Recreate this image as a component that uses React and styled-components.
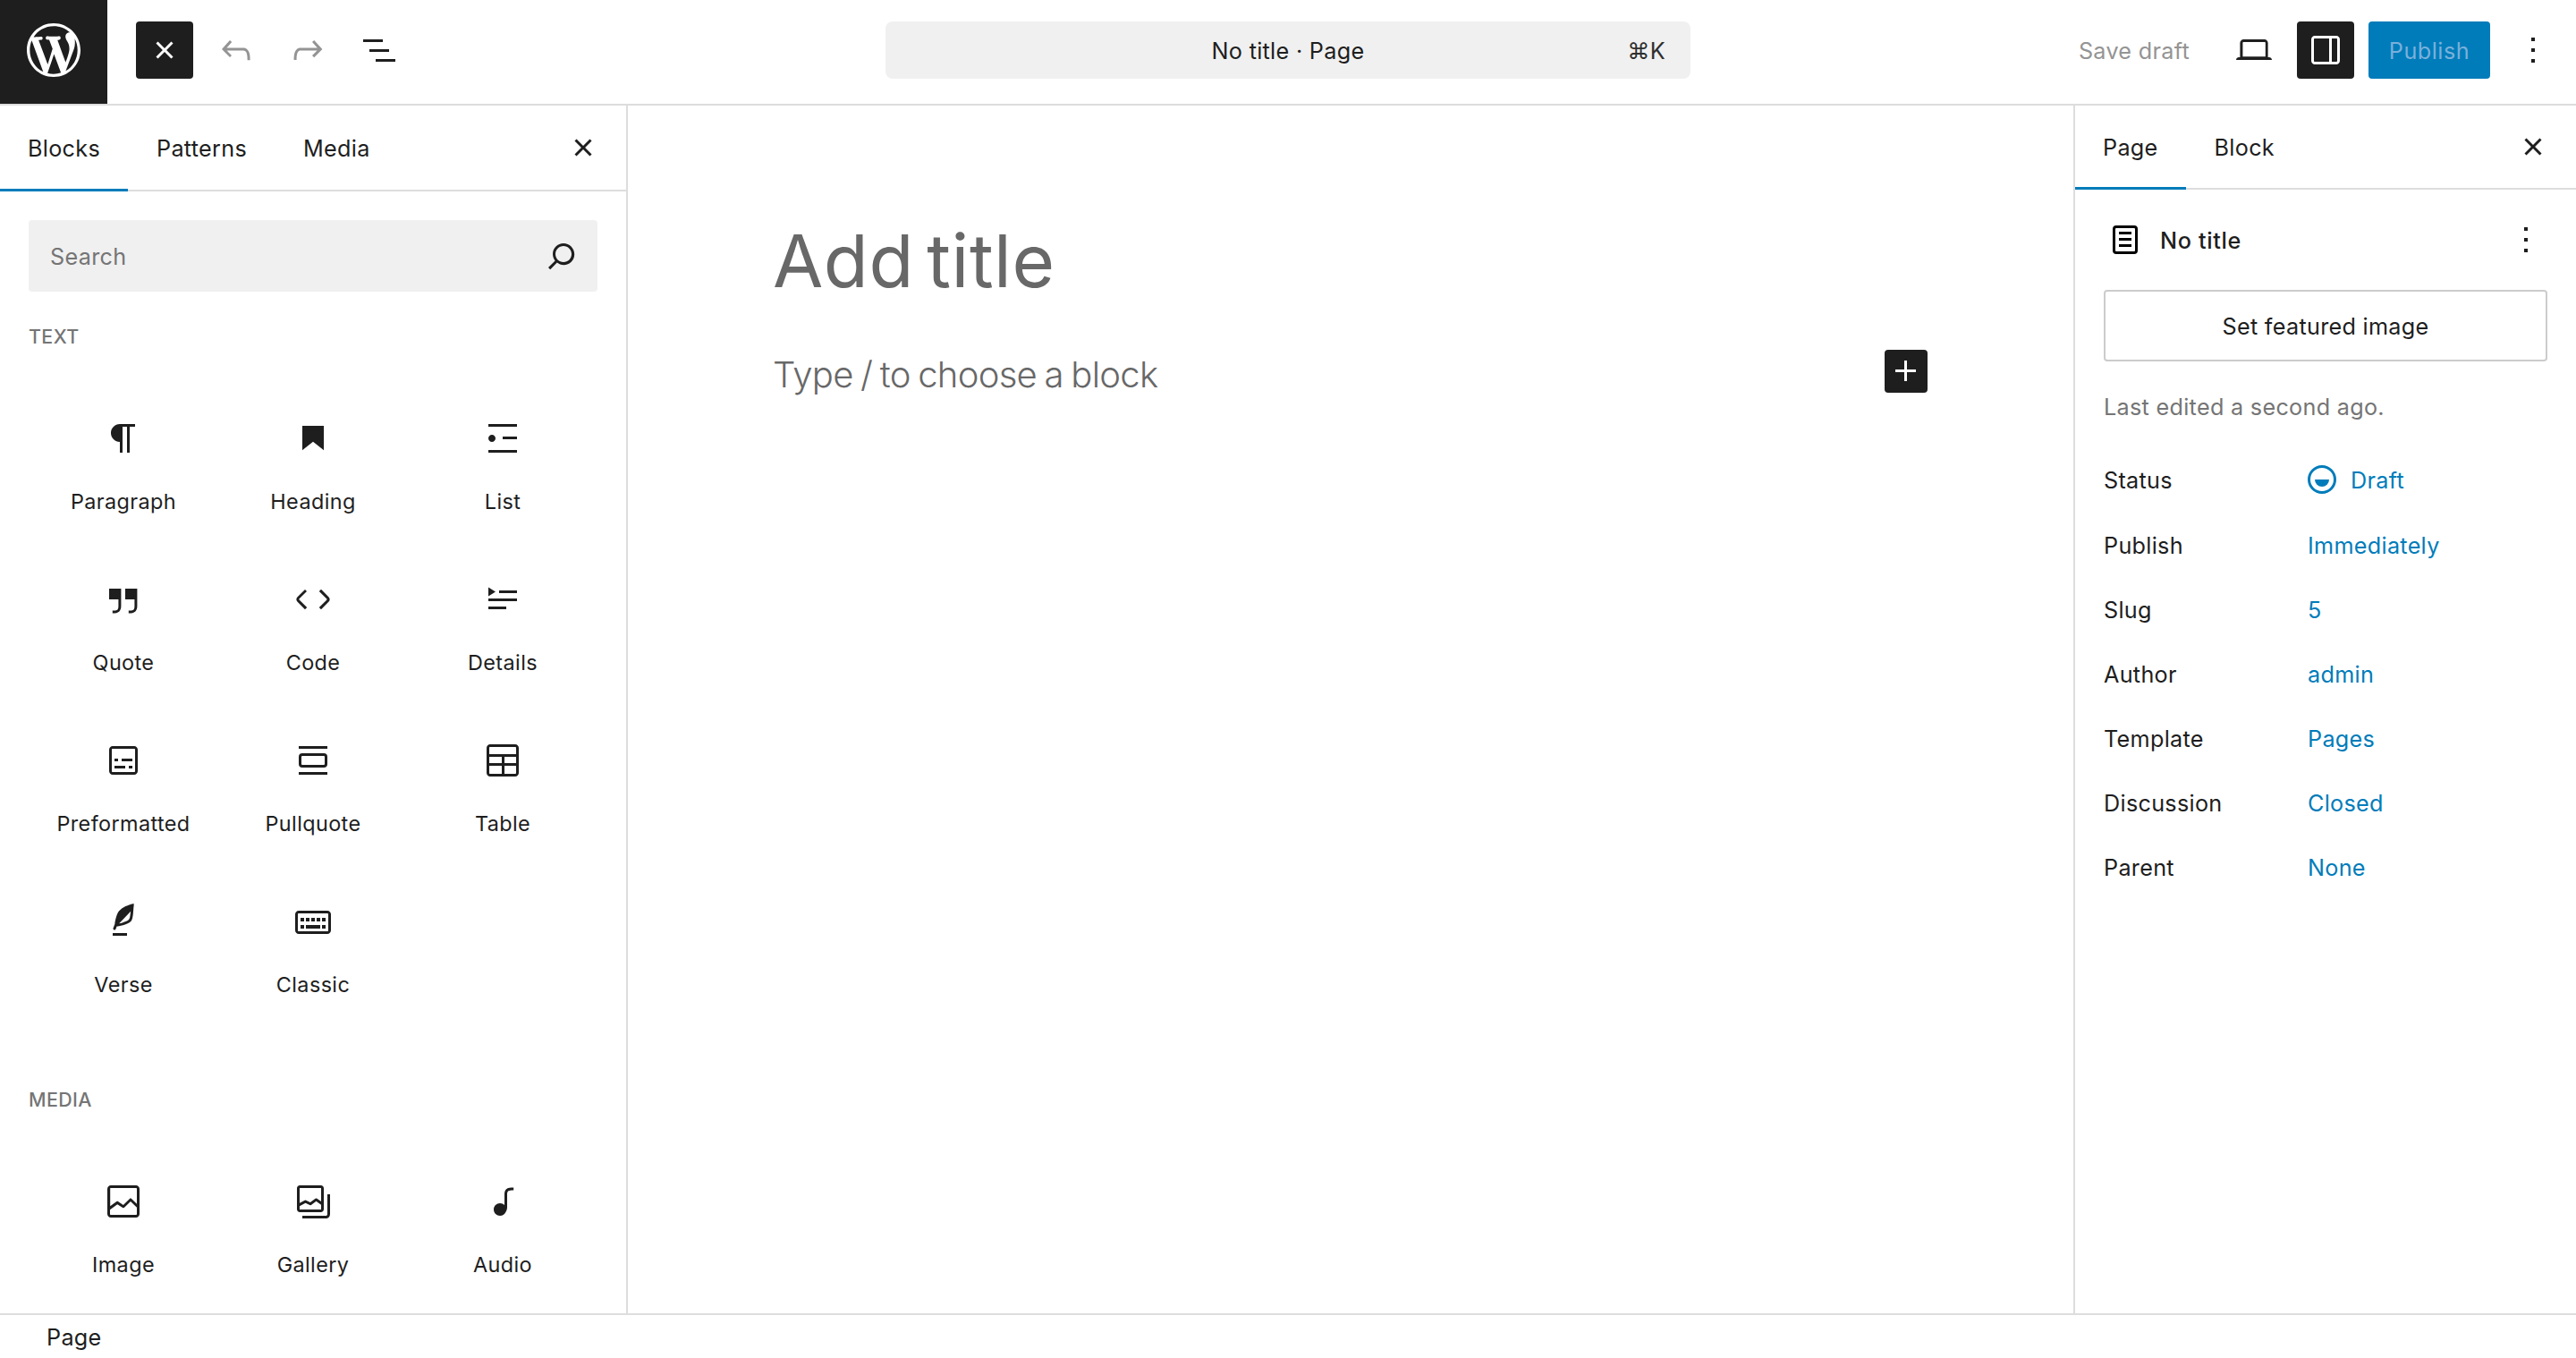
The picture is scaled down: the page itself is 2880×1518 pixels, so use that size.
import React from 'react';
import styled, { createGlobalStyle, css } from 'styled-components';

const Global = createGlobalStyle`
  *, *::before, *::after { box-sizing: border-box; }
  html, body { margin: 0; background: #fff; }
  body, button { font-family: Inter, "Liberation Sans", sans-serif; }
  button { border: 0; padding: 0; background: none; color: inherit; }
`;

const ICONS = {
  wordpress: 'M20 10c0-5.51-4.49-10-10-10C4.48 0 0 4.49 0 10c0 5.52 4.48 10 10 10 5.51 0 10-4.48 10-10zM7.78 15.37L4.37 6.22c.55-.02 1.17-.08 1.17-.08.5-.06.44-1.13-.06-1.11 0 0-1.45.11-2.37.11-.18 0-.37 0-.58-.01C4.12 2.69 6.87 1.11 10 1.11c2.33 0 4.45.87 6.05 2.34-.68-.11-1.65.39-1.65 1.58 0 .74.45 1.36.9 2.1.35.61.55 1.36.55 2.46 0 1.49-1.4 5-1.4 5l-3.03-8.37c.54-.02.82-.17.82-.17.5-.05.44-1.25-.06-1.22 0 0-1.44.12-2.38.12-.87 0-2.33-.12-2.33-.12-.5-.03-.56 1.2-.06 1.22l.92.08 1.26 3.41zM17.41 10c.24-.64.74-1.87.43-4.25.7 1.29 1.05 2.71 1.05 4.25 0 3.29-1.73 6.24-4.4 7.78.97-2.59 1.94-5.2 2.92-7.78zM6.1 18.09C3.12 16.65 1.11 13.53 1.11 10c0-1.3.23-2.48.72-3.59C3.25 10.3 4.67 14.2 6.1 18.09zm4.03-6.63l2.58 6.98c-.86.29-1.76.45-2.71.45-.79 0-1.57-.11-2.29-.33.81-2.38 1.62-4.74 2.42-7.1z',
  close: 'M12 13.06l3.712 3.713 1.061-1.06L13.061 12l3.712-3.712-1.06-1.06L12 10.938 8.288 7.227l-1.061 1.06L10.939 12l-3.712 3.712 1.06 1.061L12 13.061z',
  undo: 'M18.3 11.7c-.6-.6-1.4-.9-2.3-.9H6.7l2.9-3.3-1.1-1-4.5 5L8.5 16l1-1-2.7-2.7H16c.5 0 .9.2 1.3.5 1 1 1 3.4 1 4.5v.3h1.5v-.2c0-1.5 0-4.3-1.5-5.7z',
  redo: 'M15.6 6.5l-1.1 1 2.9 3.3H8c-.9 0-1.7.3-2.3.9-1.4 1.5-1.4 4.2-1.4 5.6v.2h1.5v-.3c0-1.1 0-3.5 1-4.5.3-.3.7-.5 1.3-.5h9.2L14.5 15l1.1 1.1 4.6-4.6-4.6-5z',
  listView: 'M3 6h11v1.5H3V6Zm3.5 5.5h11V13h-11v-1.5ZM21 17H10v1.5h11V17Z',
  laptop: 'M20.5 16h-.7V8c0-1.1-.9-2-2-2H6.2c-1.1 0-2 .9-2 2v8h-.7c-.8 0-1.5.7-1.5 1.5h20c0-.8-.7-1.5-1.5-1.5zM5.7 8c0-.3.2-.5.5-.5h11.7c.3 0 .5.2.5.5v7.6H5.7V8z',
  drawer: 'M18 4H6c-1.1 0-2 .9-2 2v12c0 1.1.9 2 2 2h12c1.1 0 2-.9 2-2V6c0-1.1-.9-2-2-2zm-4 14.5H6c-.3 0-.5-.2-.5-.5V6c0-.3.2-.5.5-.5h8v13zm4.5-.5c0 .3-.2.5-.5.5h-2.5v-13H18c.3 0 .5.2.5.5v12z',
  more: 'M13 19h-2v-2h2v2zm0-6h-2v-2h2v2zm0-6h-2V5h2v2z',
  search: 'M13 5c-3.3 0-6 2.7-6 6 0 1.4.5 2.7 1.3 3.7l-3.8 3.8 1.1 1.1 3.8-3.8c1 .8 2.3 1.3 3.7 1.3 3.3 0 6-2.7 6-6S16.3 5 13 5zm0 10.5c-2.5 0-4.5-2-4.5-4.5s2-4.5 4.5-4.5 4.5 2 4.5 4.5-2 4.5-4.5 4.5z',
  plus: 'M11 12.5V17.5H12.5V12.5H17.5V11H12.5V6H11V11H6V12.5H11Z',
  page: 'M15.5 7.5h-7V9h7V7.5Zm-7 3.5h7v1.5h-7V11Zm7 3.5h-7V16h7v-1.5ZM17 4H7a2 2 0 0 0-2 2v12a2 2 0 0 0 2 2h10a2 2 0 0 0 2-2V6a2 2 0 0 0-2-2ZM7 5.5h10a.5.5 0 0 1 .5.5v12a.5.5 0 0 1-.5.5H7a.5.5 0 0 1-.5-.5V6a.5.5 0 0 1 .5-.5Z',
  draft: 'M12 4a8 8 0 1 0 0 16 8 8 0 0 0 0-16Zm6.5 8a6.5 6.5 0 1 1-13 0 6.5 6.5 0 0 1 13 0ZM8 12a4 4 0 0 0 8 0H8Z',
  paragraph: 'm9.99609 14v-.2251l.00391.0001v6.225h1.5v-14.5h2.5v14.5h1.5v-14.5h3v-1.5h-8.50391c-2.76142 0-5 2.23858-5 5 0 2.7614 2.23858 5 5 5z',
  heading: 'M6 5V18.5911L12 13.8473L18 18.5911V5H6Z',
  list: 'M4 4v1.5h16V4H4zm8 8.5h8V11h-8v1.5zM4 20h16v-1.5H4V20zm4-8c0-1.1-.9-2-2-2s-2 .9-2 2 .9 2 2 2 2-.9 2-2z',
  quote: 'M13 6v6h5.2v4c0 .8-.2 1.4-.5 1.7-.6.6-1.6.6-2.5.5h-.3v1.5h.5c1 0 2.3-.1 3.3-1 .6-.6 1-1.6 1-2.8V6H13zm-9 6h5.2v4c0 .8-.2 1.4-.5 1.7-.6.6-1.6.6-2.5.5h-.3v1.5h.5c1 0 2.3-.1 3.3-1 .6-.6 1-1.6 1-2.8V6H4v6z',
  code: 'M20.8 10.7l-4.3-4.3-1.1 1.1 4.3 4.3c.1.1.1.3 0 .4l-4.3 4.3 1.1 1.1 4.3-4.3c.7-.8.7-1.9 0-2.6zM4.2 11.8l4.3-4.3-1-1-4.3 4.3c-.7.7-.7 1.8 0 2.5l4.3 4.3 1.1-1.1-4.3-4.3c-.2-.1-.2-.3-.1-.4z',
  details: 'M4 16h10v1.5H4V16Zm0-4.5h16V13H4v-1.5ZM10 7h10v1.5H10V7ZM4 5.25l4 2.5-4 2.5v-5Z',
  preformatted: 'M18 4H6c-1.1 0-2 .9-2 2v12c0 1.1.9 2 2 2h12c1.1 0 2-.9 2-2V6c0-1.1-.9-2-2-2zm.5 14c0 .3-.2.5-.5.5H6c-.3 0-.5-.2-.5-.5V6c0-.3.2-.5.5-.5h12c.3 0 .5.2.5.5v12zM7 16.5h6V15H7v1.5zm4-4h6V11h-6v1.5zM9 11H7v1.5h2V11zm6 5.5h2V15h-2v1.5z',
  pullquote: 'M18 8H6a2 2 0 0 0-2 2v4a2 2 0 0 0 2 2h12a2 2 0 0 0 2-2v-4a2 2 0 0 0-2-2zm.5 6a.5.5 0 0 1-.5.5H6a.5.5 0 0 1-.5-.5v-4a.5.5 0 0 1 .5-.5h12a.5.5 0 0 1 .5.5v4zM4 4h16v1.5H4V4zm0 14.5h16V20H4v-1.5z',
  table: 'M19 3H5c-1.1 0-2 .9-2 2v14c0 1.1.9 2 2 2h14c1.1 0 2-.9 2-2V5c0-1.1-.9-2-2-2zM5 4.5h14c.3 0 .5.2.5.5v3.5h-15V5c0-.3.2-.5.5-.5zm8 5.5h6.5v3.5H13V10zm-1.5 3.5h-7V10h7v3.5zm-7 5.5v-4h7v4.5H5c-.3 0-.5-.2-.5-.5zm14.5.5h-6V15h6.5v4c0 .3-.2.5-.5.5z',
  verse: 'M17.8 2l-.9.3c-.1 0-3.6 1-5.2 2.1C10 5.5 9.3 6.5 8.9 7.1c-.6.9-1.7 4.7-1.7 6.3l-.9 2.3c-.2.4 0 .8.4 1 .1 0 .2.1.3.1.3 0 .6-.2.7-.5l.6-1.5c.3 0 .7-.1 1.2-.2.7-.1 1.4-.3 2.2-.5.8-.2 1.6-.5 2.4-.8.7-.3 1.4-.7 1.9-1.2s.8-1.2 1-1.9c.2-.7.3-1.6.4-2.4.1-.8.1-1.7.2-2.5 0-.8.1-1.5.2-2.1V2zm-1.9 5.6c-.1.8-.2 1.5-.3 2.1-.2.6-.4 1-.6 1.3-.3.3-.8.6-1.4.9-.7.3-1.4.5-2.2.8-.6.2-1.3.3-1.8.4L15 7.5c.3-.3.6-.7 1-1.1 0 .4 0 .8-.1 1.2zM6 20h8v-1.5H6V20z',
  classic: 'M20 6H4c-1.1 0-2 .9-2 2v9c0 1.1.9 2 2 2h16c1.1 0 2-.9 2-2V8c0-1.1-.9-2-2-2zm.5 11c0 .3-.2.5-.5.5H4c-.3 0-.5-.2-.5-.5V8c0-.3.2-.5.5-.5h16c.3 0 .5.2.5.5v9zM10 10H8v2h2v-2zm-5 2h2v-2H5v2zm8-2h-2v2h2v-2zm-5 6h8v-2H8v2zm6-4h2v-2h-2v2zm3 0h2v-2h-2v2zm0 4h2v-2h-2v2zM5 16h2v-2H5v2z',
  image: 'M19 3H5c-1.1 0-2 .9-2 2v14c0 1.1.9 2 2 2h14c1.1 0 2-.9 2-2V5c0-1.1-.9-2-2-2zM5 4.5h14c.3 0 .5.2.5.5v8.4l-3-2.9c-.3-.3-.8-.3-1 0L11.9 14 9 12c-.3-.2-.6-.2-.8 0l-3.6 2.6V5c-.1-.3.1-.5.4-.5zm14 15H5c-.3 0-.5-.2-.5-.5v-2.4l4.1-3 3 1.9c.3.2.7.2.9-.1L16 12l3.5 3.4V19c0 .3-.2.5-.5.5z',
  gallery: 'M16.375 4.5H4.625a.125.125 0 0 0-.125.125v8.254l2.859-1.54a.75.75 0 0 1 .68-.016l2.384 1.142 2.89-2.074a.75.75 0 0 1 .874 0l2.313 1.66V4.625a.125.125 0 0 0-.125-.125Zm.125 9.398-2.75-1.975-2.813 2.02a.75.75 0 0 1-.76.067l-2.444-1.17L4.5 14.583v1.792c0 .069.056.125.125.125h11.75a.125.125 0 0 0 .125-.125v-2.477ZM4.625 3C3.728 3 3 3.728 3 4.625v11.75C3 17.273 3.728 18 4.625 18h11.75c.898 0 1.625-.727 1.625-1.625V4.625C18 3.728 17.273 3 16.375 3H4.625ZM20 8v11c0 .69-.31 1-.999 1H6v1.5h13.001c1.52 0 2.499-.982 2.499-2.5V8H20Z',
  audio: 'M17.7 4.3c-1.2 0-2.8 0-3.8 1-.6.6-.9 1.5-.9 2.6V14c-.6-.6-1.5-1-2.5-1C8.6 13 7 14.6 7 16.5S8.6 20 10.5 20c1.5 0 2.8-1 3.3-2.3.5-.8.7-1.8.7-2.5V7.9c0-.7.2-1.2.5-1.6.6-.6 1.8-.6 2.8-.6h.3V4.3h-.4z',
};

const Svg = styled.svg`
  display: block;
  flex: none;
  fill: currentColor;
`;

function Icon({ name, size = 48 }) {
  return (
    <Svg width={size} height={size} viewBox={name === 'wordpress' ? '-2 -2 24 24' : '0 0 24 24'} aria-hidden="true">
      <path fillRule="evenodd" d={ICONS[name]} />
    </Svg>
  );
}

const uiText = css`
  font-size: 25.2px;
  font-weight: 400;
  letter-spacing: 0.3px;
  line-height: 32px;
`;

const Page = styled.div`
  display: grid;
  grid-template-rows: 118px minmax(0, 1fr) 50px;
  height: 1518px;
  width: 2880px;
  overflow: hidden;
  color: #1e1e1e;
  ${uiText}
`;

const Header = styled.header`
  display: grid;
  grid-template-columns: 990px 900px 990px;
  align-items: start;
  border-bottom: 2px solid #ddd;
`;

const HeaderLeft = styled.div`
  display: flex;
  align-items: center;
  gap: 16px;
  height: 112px;
`;

const HeaderRight = styled.div`
  display: flex;
  align-items: center;
  justify-content: flex-end;
  gap: 16px;
  height: 112px;
  padding-right: 16px;
`;

const SiteHub = styled.div`
  display: flex;
  align-items: center;
  align-self: flex-start;
  justify-content: center;
  width: 120px;
  height: 116px;
  margin-right: 16px;
  padding-bottom: 4px;
  background: #1e1e1e;
  color: #fff;
`;

const IconButton = styled.button`
  display: flex;
  align-items: center;
  justify-content: center;
  flex: none;
  width: 64px;
  height: 64px;
  border-radius: 4px;
  background: ${(p) => (p.$pressed ? '#1e1e1e' : 'transparent')};
  color: ${(p) => (p.$pressed ? '#fff' : p.$muted ? '#949494' : '#1e1e1e')};
`;

const CommandBar = styled.button`
  display: grid;
  grid-template-columns: 1fr auto 1fr;
  align-items: center;
  height: 64px;
  margin-top: 24px;
  padding: 2px 28px 0;
  border-radius: 8px;
  background: #f0f0f0;
  ${uiText}
`;

const Shortcut = styled.span`
  justify-self: end;
  color: #2f2f2f;
`;

const SaveDraft = styled.button`
  padding: 2px 24px 0;
  color: #949494;
  ${uiText}
`;

const PublishButton = styled.button`
  width: 136px;
  height: 64px;
  padding-top: 2px;
  border-radius: 4px;
  background: #007cba;
  color: #7ab0db;
  ${uiText}
  letter-spacing: 0.5px;
`;

const Body = styled.div`
  display: grid;
  grid-template-columns: 702px minmax(0, 1fr) 562px;
  min-height: 0;
`;

const Inserter = styled.aside`
  border-right: 2px solid #ddd;
  overflow: hidden;
`;

const TabBar = styled.div`
  display: flex;
  align-items: stretch;
  gap: 1px;
  height: ${(p) => p.$height}px;
  box-shadow: inset 0 -2px #ddd;
  padding-right: 16px;
`;

const Tab = styled.button`
  padding: 0 31px 1px;
  box-shadow: ${(p) => (p.$active ? 'inset 0 -3px #007cba' : 'none')};
  ${uiText}
`;

const TabClose = styled.div`
  display: flex;
  align-items: center;
  margin-left: auto;
  padding-bottom: 2px;
`;

const InserterBody = styled.div`
  padding: 32px 32px 0;
`;

const SearchField = styled.div`
  display: flex;
  align-items: center;
  justify-content: space-between;
  height: 80px;
  margin-bottom: 34px;
  padding: 0 16px 0 24px;
  border-radius: 4px;
  background: #f0f0f0;
`;

const SearchHint = styled.span`
  padding-top: 1px;
  color: #757575;
`;

const Section = styled.section`
  padding-bottom: 63px;
`;

const SectionTitle = styled.h2`
  margin: 0 0 38px;
  color: #757575;
  font-size: 21.4px;
  font-weight: 500;
  letter-spacing: 0.4px;
  line-height: 32px;
  text-transform: uppercase;
`;

const BlockGrid = styled.div`
  display: grid;
  grid-template-columns: repeat(3, 1fr);
  grid-auto-rows: 180px;
`;

const BlockItem = styled.button`
  display: flex;
  flex-direction: column;
  align-items: center;
  gap: 31px;
  padding-top: 36px;
  font-size: 23.4px;
  letter-spacing: 0.4px;
  line-height: 32px;
`;

const Canvas = styled.main`
  display: flex;
  justify-content: center;
  background: #fff;
`;

const Content = styled.div`
  width: 1290px;
  padding-top: 122px;
  color: #686868;
`;

const Title = styled.h1`
  margin: 0 0 0 -1px;
  font-size: 81.7px;
  font-weight: 400;
  letter-spacing: 0.5px;
  line-height: 104px;
  word-spacing: -9px;
`;

const EmptyBlock = styled.div`
  display: flex;
  align-items: center;
  justify-content: space-between;
  height: 48px;
  margin-top: 47px;
`;

const Prompt = styled.p`
  margin: 0 0 0 -1px;
  padding-top: 7px;
  font-size: 40px;
  font-weight: 300;
  letter-spacing: -0.7px;
  line-height: 48px;
  word-spacing: -2.1px;
`;

const AddBlock = styled.button`
  width: 48px;
  height: 48px;
  border-radius: 4px;
  background: #1e1e1e;
  color: #fff;
`;

const Settings = styled.aside`
  border-left: 2px solid #ddd;
`;

const SettingsBody = styled.div`
  padding: 24px 32px 0;
`;

const SummaryHead = styled.div`
  display: flex;
  align-items: center;
  height: 64px;
  margin-bottom: 24px;
  color: #000;
`;

const SummaryTitle = styled.h2`
  flex: 1;
  margin: 0;
  padding: 2px 0 0 15px;
  color: #1e1e1e;
  ${uiText}
  font-weight: 500;
  letter-spacing: 0.65px;
`;

const SummaryMenu = styled.div`
  color: #1e1e1e;
`;

const FeaturedButton = styled.button`
  width: 100%;
  height: 80px;
  padding-top: 2px;
  border: 2px solid #ccc;
  border-radius: 4px;
  ${uiText}
`;

const EditedNote = styled.p`
  margin: 35px 0 33px;
  color: #757575;
`;

const Rows = styled.dl`
  display: grid;
  gap: 8px;
  margin: 0;
`;

const Row = styled.div`
  display: flex;
  align-items: center;
  height: 64px;
  margin-bottom: ${(p) => (p.$spaced ? '1px' : '0')};
`;

const RowLabel = styled.dt`
  width: 228px;
  padding-top: 2px;
`;

const RowValue = styled.dd`
  display: flex;
  align-items: center;
  gap: 8px;
  margin: 0 0 0 ${(p) => (p.$icon ? '-8px' : '0')};
  color: #007cba;
`;

const RowText = styled.span`
  padding-top: 2px;
`;

const Footer = styled.footer`
  display: flex;
  align-items: center;
  padding: 2px 52px 0;
  border-top: 2px solid #ddd;
`;

const SECTIONS = [
  {
    title: 'Text',
    blocks: [
      ['paragraph', 'Paragraph'],
      ['heading', 'Heading'],
      ['list', 'List'],
      ['quote', 'Quote'],
      ['code', 'Code'],
      ['details', 'Details'],
      ['preformatted', 'Preformatted'],
      ['pullquote', 'Pullquote'],
      ['table', 'Table'],
      ['verse', 'Verse'],
      ['classic', 'Classic'],
    ],
  },
  {
    title: 'Media',
    blocks: [
      ['image', 'Image'],
      ['gallery', 'Gallery'],
      ['audio', 'Audio'],
    ],
  },
];

const ROWS = [
  ['Status', 'Draft', 'draft'],
  ['Publish', 'Immediately'],
  ['Slug', '5'],
  ['Author', 'admin'],
  ['Template', 'Pages'],
  ['Discussion', 'Closed'],
  ['Parent', 'None'],
];

export default function App() {
  return (
    <Page>
      <Global />
      <Header>
        <HeaderLeft>
          <SiteHub><Icon name="wordpress" size={72} /></SiteHub>
          <IconButton $pressed><Icon name="close" /></IconButton>
          <IconButton $muted><Icon name="undo" /></IconButton>
          <IconButton $muted><Icon name="redo" /></IconButton>
          <IconButton><Icon name="listView" /></IconButton>
        </HeaderLeft>
        <CommandBar>
          <span />
          <span>No title · Page</span>
          <Shortcut>⌘K</Shortcut>
        </CommandBar>
        <HeaderRight>
          <SaveDraft>Save draft</SaveDraft>
          <IconButton><Icon name="laptop" /></IconButton>
          <IconButton $pressed><Icon name="drawer" /></IconButton>
          <PublishButton>Publish</PublishButton>
          <IconButton><Icon name="more" /></IconButton>
        </HeaderRight>
      </Header>
      <Body>
        <Inserter>
          <TabBar $height={96}>
            <Tab $active>Blocks</Tab>
            <Tab>Patterns</Tab>
            <Tab>Media</Tab>
            <TabClose><IconButton><Icon name="close" /></IconButton></TabClose>
          </TabBar>
          <InserterBody>
            <SearchField>
              <SearchHint>Search</SearchHint>
              <Icon name="search" />
            </SearchField>
            {SECTIONS.map((section) => (
              <Section key={section.title}>
                <SectionTitle>{section.title}</SectionTitle>
                <BlockGrid>
                  {section.blocks.map(([icon, label]) => (
                    <BlockItem key={label}>
                      <Icon name={icon} />
                      <span>{label}</span>
                    </BlockItem>
                  ))}
                </BlockGrid>
              </Section>
            ))}
          </InserterBody>
        </Inserter>
        <Canvas>
          <Content>
            <Title>Add title</Title>
            <EmptyBlock>
              <Prompt>Type / to choose a block</Prompt>
              <AddBlock><Icon name="plus" /></AddBlock>
            </EmptyBlock>
          </Content>
        </Canvas>
        <Settings>
          <TabBar $height={94}>
            <Tab $active>Page</Tab>
            <Tab>Block</Tab>
            <TabClose><IconButton><Icon name="close" /></IconButton></TabClose>
          </TabBar>
          <SettingsBody>
            <SummaryHead>
              <Icon name="page" />
              <SummaryTitle>No title</SummaryTitle>
              <SummaryMenu><Icon name="more" /></SummaryMenu>
            </SummaryHead>
            <FeaturedButton>Set featured image</FeaturedButton>
            <EditedNote>Last edited a second ago.</EditedNote>
            <Rows>
              {ROWS.map(([label, value, icon]) => (
                <Row key={label} $spaced={Boolean(icon)}>
                  <RowLabel>{label}</RowLabel>
                  <RowValue $icon={icon}>
                    {icon && <Icon name={icon} />}
                    <RowText>{value}</RowText>
                  </RowValue>
                </Row>
              ))}
            </Rows>
          </SettingsBody>
        </Settings>
      </Body>
      <Footer>Page</Footer>
    </Page>
  );
}
